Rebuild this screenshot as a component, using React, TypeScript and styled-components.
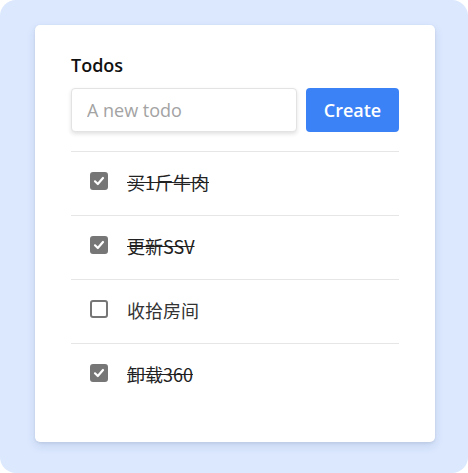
import React, { FC, useState } from "react";
import styled, { createGlobalStyle } from "styled-components";

const GlobalStyle = createGlobalStyle`
  html, body {
    margin: 0;
    padding: 0;
    background: #ffffff;
  }
  body {
    font-family: "Open Sans", "Noto Sans", "Noto Sans CJK SC", sans-serif;
  }
`;

const Page = styled.div`
  width: 468px;
  height: 473px;
  box-sizing: border-box;
  background: #dbe8fe;
  border-radius: 16px;
  padding: 25px 33px 0 35px;
`;

const Card = styled.div`
  width: 400px;
  box-sizing: border-box;
  background: #fff;
  border-radius: 5px;
  box-shadow: 0 4px 10px rgba(30, 60, 120, 0.12), 0 1px 3px rgba(0, 0, 0, 0.08);
  padding: 28px 36px 35px;
`;

const Title = styled.h2`
  margin: 0 0 11px;
  font-size: 18px;
  font-weight: 600;
  line-height: 24px;
  color: #111;
`;

const Form = styled.div`
  display: flex;
  gap: 9px;
  margin-bottom: 19px;
`;

const Input = styled.input`
  width: 226px;
  height: 44px;
  box-sizing: border-box;
  border: 1px solid #e3e3e3;
  border-radius: 4px;
  box-shadow: 0 2px 4px rgba(0, 0, 0, 0.12);
  padding: 0 15px;
  font-family: inherit;
  font-size: 18px;
  color: #333;
  outline: none;
  &::placeholder {
    color: #a3a3a3;
  }
`;

const Button = styled.button`
  width: 93px;
  height: 44px;
  border: none;
  border-radius: 4px;
  background: #3b82f6;
  color: #fff;
  font-family: inherit;
  font-size: 18px;
  font-weight: 600;
  cursor: pointer;
`;

const List = styled.ul`
  list-style: none;
  margin: 0;
  padding: 0;
`;

const Row = styled.li`
  display: flex;
  align-items: center;
  gap: 19px;
  height: 64px;
  padding: 0 0 4px 19px;
  border-top: 1px solid #e6e6e6;
  box-sizing: border-box;
`;

const Box = styled.span<{ $checked: boolean }>`
  display: inline-flex;
  align-items: center;
  justify-content: center;
  flex-shrink: 0;
  width: 18px;
  height: 18px;
  margin-bottom: 1px;
  box-sizing: border-box;
  border-radius: 3px;
  border: 2px solid #767676;
  background: ${(p) => (p.$checked ? "#767676" : "#fff")};
  cursor: pointer;
`;

const Label = styled.span<{ $done: boolean }>`
  font-family: "Noto Sans CJK SC", "Open Sans", sans-serif;
  font-size: 18px;
  color: ${(p) => (p.$done ? "#222" : "#333")};
  text-decoration: ${(p) => (p.$done ? "line-through" : "none")};
`;

type Todo = { text: string; done: boolean };

const initial: Todo[] = [
  { text: "买1斤牛肉", done: true },
  { text: "更新SSV", done: true },
  { text: "收拾房间", done: false },
  { text: "卸载360", done: true },
];

const App: FC = () => {
  const [todos, setTodos] = useState(initial);
  const toggle = (i: number) =>
    setTodos(todos.map((t, j) => (j === i ? { ...t, done: !t.done } : t)));

  return (
    <Page>
      <GlobalStyle />
      <Card>
        <Title>Todos</Title>
        <Form>
          <Input placeholder="A new todo" />
          <Button>Create</Button>
        </Form>
        <List>
          {todos.map((t, i) => (
            <Row key={i}>
              <Box $checked={t.done} onClick={() => toggle(i)}>
                {t.done && (
                  <svg width="12" height="12" viewBox="0 0 12 12">
                    <path d="M2 6.3 L4.8 9 L10 3" fill="none" stroke="#fff" strokeWidth="2.2" strokeLinecap="round" strokeLinejoin="round" />
                  </svg>
                )}
              </Box>
              <Label $done={t.done}>{t.text}</Label>
            </Row>
          ))}
        </List>
      </Card>
    </Page>
  );
};

export default App;
